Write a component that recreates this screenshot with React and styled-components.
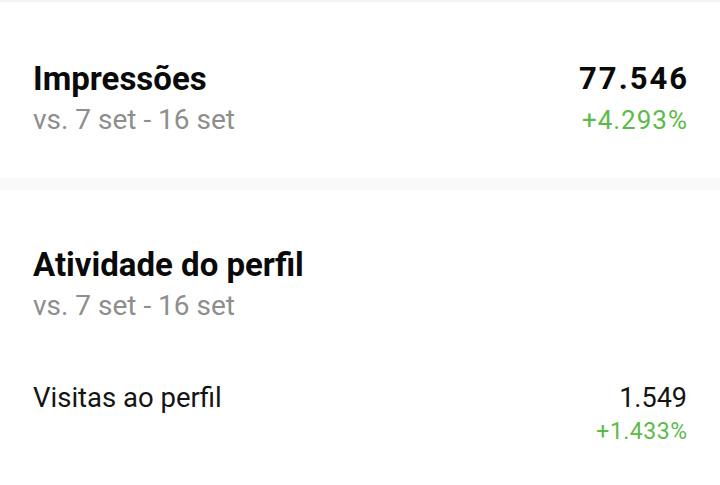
import React from "react";
import styled, { createGlobalStyle } from "styled-components";

const GlobalStyle = createGlobalStyle`
  html, body {
    margin: 0;
    padding: 0;
    background: #ffffff;
  }
  body {
    font-family: Roboto, "Liberation Sans", sans-serif;
    color: #111111;
  }
`;

const Page = styled.div`
  width: 720px;
  min-height: 485px;
  background: #ffffff;
  border-top: 2px solid #f4f4f4;
`;

const Section = styled.section`
  padding: ${props => props.$pad || "0 33px"};
`;

const Divider = styled.div`
  height: 12px;
  background: #f8f8f8;
`;

const HeaderRow = styled.div`
  display: flex;
  justify-content: space-between;
  align-items: flex-start;
`;

const TitleBlock = styled.div`
  display: flex;
  flex-direction: column;
`;

const Title = styled.h2`
  margin: 0;
  font-size: 33px;
  line-height: 40px;
  font-weight: 700;
  color: #0a0a0a;
`;

const Subtitle = styled.div`
  font-size: 28px;
  line-height: 42px;
  color: #8e8e8e;
`;

const ValueBlock = styled.div`
  display: flex;
  flex-direction: column;
  align-items: flex-end;
`;

const BigValue = styled.div`
  font-size: 31px;
  line-height: 40px;
  font-weight: 700;
  color: #0a0a0a;
  letter-spacing: 2px;
  margin-right: -2px;
`;

const Change = styled.div`
  font-size: ${props => (props.$small ? "23px" : "26px")};
  line-height: ${props => (props.$small ? "36px" : "42px")};
  letter-spacing: ${props => (props.$small ? "0.5px" : "1px")};
  margin-right: ${props => (props.$small ? "-0.5px" : "-1px")};
  color: #5dba49;
`;

const MetricRow = styled.div`
  display: flex;
  justify-content: space-between;
  align-items: flex-start;
`;

const MetricLabel = styled.div`
  font-size: 27.5px;
  line-height: 32px;
  color: #141414;
`;

const MetricValue = styled.div`
  font-size: 27px;
  line-height: 32px;
  color: #141414;
`;

const summary = {
  title: "Impressões",
  range: "vs. 7 set - 16 set",
  value: "77.546",
  change: "+4.293%",
};

const metrics = [
  { label: "Visitas ao perfil", value: "1.549", change: "+1.433%" },
];

export default function App() {
  return (
    <>
      <GlobalStyle />
      <Page>
        <Section $pad="57px 33px 37px">
          <HeaderRow>
            <TitleBlock>
              <Title>{summary.title}</Title>
              <Subtitle>{summary.range}</Subtitle>
            </TitleBlock>
            <ValueBlock>
              <BigValue>{summary.value}</BigValue>
              <Change>{summary.change}</Change>
            </ValueBlock>
          </HeaderRow>
        </Section>
        <Divider />
        <Section $pad="55px 33px 0">
          <TitleBlock>
            <Title>Atividade do perfil</Title>
            <Subtitle>vs. 7 set - 16 set</Subtitle>
          </TitleBlock>
        </Section>
        <Section $pad="55px 33px 0">
          {metrics.map(m => (
            <MetricRow key={m.label}>
              <MetricLabel>{m.label}</MetricLabel>
              <ValueBlock>
                <MetricValue>{m.value}</MetricValue>
                <Change $small>{m.change}</Change>
              </ValueBlock>
            </MetricRow>
          ))}
        </Section>
      </Page>
    </>
  );
}
